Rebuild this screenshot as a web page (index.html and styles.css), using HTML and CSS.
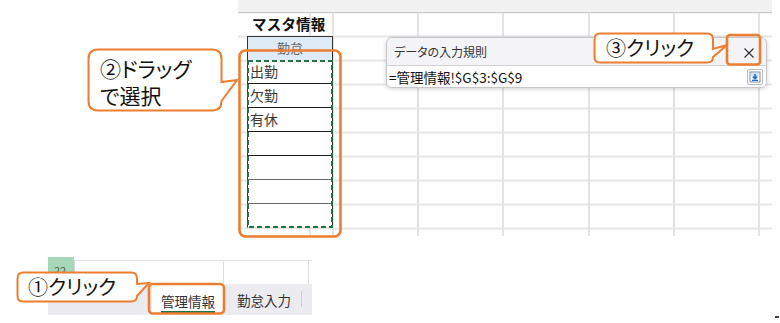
FILE: index.html
```html
<!DOCTYPE html>
<html lang="ja">
<head>
<meta charset="utf-8">
<link rel="stylesheet" href="styles.css">
</head>
<body>
<div class="page">
  <div class="sheet">
    <div class="master">
      <div class="m-title">マスタ情報</div>
      <div class="m-head">勤怠</div>
      <div class="m-row">出勤</div>
      <div class="m-row">欠勤</div>
      <div class="m-row">有休</div>
      <div class="m-row"></div>
      <div class="m-row gray"></div>
      <div class="m-row gray"></div>
      <div class="m-row last"></div>
    </div>
  </div>

  <div class="bottom">
    <div class="rows">
      <div class="rowhdr"><div class="rowsel">22</div></div>
      <div class="cells">
        <div class="cell c1"></div>
        <div class="cell c2"></div>
        <div class="cell c3"></div>
      </div>
    </div>
    <div class="tabs">
      <div class="tab-space"></div>
      <div class="tab active"><span class="tab-label">管理情報</span></div>
      <div class="tab-sep"></div>
      <div class="tab">勤怠入力</div>
      <div class="tab-sep"></div>
    </div>
  </div>

  <div class="dialog">
    <div class="dlg-title">
      <span class="dlg-text">データの入力規則</span>
      <span class="dlg-close">
        <svg width="12" height="12" viewBox="0 0 12 12"><path d="M1.5 1.5 L10.5 10.5 M10.5 1.5 L1.5 10.5" stroke="#333" stroke-width="1.2" fill="none"/></svg>
      </span>
    </div>
    <div class="dlg-input">
      <span class="formula">=管理情報!$G$3:$G$9</span>
      <span class="dlg-btn">
        <svg width="12" height="12" viewBox="0 0 12 12">
          <rect x="1" y="1" width="10" height="10" fill="#fff" stroke="#7d8da3" stroke-width="1"/>
          <rect x="2" y="2" width="8" height="3" fill="#d8e4f5"/>
          <path d="M6 3 V7.5 M3.8 5.5 L6 7.8 L8.2 5.5" stroke="#1f6fd1" stroke-width="1.6" fill="none"/>
          <path d="M3 9.3 H9" stroke="#1f6fd1" stroke-width="1.2"/>
        </svg>
      </span>
    </div>
  </div>

  <svg class="overlay" width="780" height="323" viewBox="0 0 780 323">
    <rect x="248" y="61" width="84" height="166" fill="none" stroke="#217346" stroke-width="2" stroke-dasharray="5 3"/>
    <rect x="239.5" y="50.5" width="101" height="186" rx="6" fill="none" stroke="#ED7D31" stroke-width="2.6"/>
    <rect x="727" y="35" width="33" height="29.5" rx="3" fill="none" stroke="#ED7D31" stroke-width="2.6"/>
    <rect x="149" y="284" width="75" height="29.5" rx="4" fill="none" stroke="#ED7D31" stroke-width="2.6"/>
    <path d="M98,49.5 H212 Q221.5,49.5 221.5,59 V82 L237,80 L221.5,101 Q221.5,110.5 212,110.5 H98 Q88.5,110.5 88.5,101 V59 Q88.5,49.5 98,49.5 Z" fill="#fff" stroke="#ED7D31" stroke-width="2"/>
    <path d="M600,33.5 H707 Q713,33.5 713,39.5 V49 L727,45 L713,57 Q713,62.5 707,62.5 H600 Q594.5,62.5 594.5,57 V39.5 Q594.5,33.5 600,33.5 Z" fill="#fff" stroke="#ED7D31" stroke-width="2"/>
    <path d="M23,272.5 H131 Q137,272.5 137,278.5 V284 L149,283 L137,296 Q137,301.5 131,301.5 H23 Q17.5,301.5 17.5,296 V278.5 Q17.5,272.5 23,272.5 Z" fill="#fff" stroke="#ED7D31" stroke-width="2"/>
  </svg>

  <div class="callout c-drag">②ドラッグ<br>で選択</div>
  <div class="callout c-close">③クリック</div>
  <div class="callout c-tab">①クリック</div>
  <div class="corner-mark"></div>
</div>
</body>
</html>
```

FILE: styles.css
```css
* { box-sizing: border-box; }
html, body { margin: 0; padding: 0; background: #fff; }
body { font-family: "Noto Sans CJK JP", "Noto Sans", sans-serif; color: #222; }

.page {
  position: relative;
  width: 780px;
  height: 323px;
  overflow: hidden;
  background: #fff;
}

/* ---------- top sheet ---------- */
.sheet {
  margin-left: 238px;
  width: 534px;
  height: 236px;
  background-color: #fff;
  background-image:
    linear-gradient(#f1f1f1, #f1f1f1),
    linear-gradient(#c9c9c9, #c9c9c9),
    repeating-linear-gradient(90deg, #e3e3e3 0 2px, transparent 2px 85.2px),
    repeating-linear-gradient(180deg, #e6e6e6 0 2px, transparent 2px 24px);
  background-size: 100% 12px, 100% 1px, 100% 100%, 100% 100%;
  background-position: 0 0, 0 12px, 94px 0, 0 11.5px;
  background-repeat: no-repeat, no-repeat, repeat, repeat;
}

.master {
  margin-left: 9px;
  width: 86px;
  padding-top: 12px;
  display: flex;
  flex-direction: column;
}
.m-title {
  height: 24px;
  font-size: 14.5px;
  font-weight: 700;
  line-height: 24px;
  padding-left: 5px;
  color: #111;
  letter-spacing: 0.2px;
}
.m-head {
  height: 24px;
  background: #ddebf7;
  border: 1px solid #333;
  border-bottom: none;
  text-align: center;
  font-size: 13px;
  line-height: 22px;
  color: #666;
}
.m-row {
  height: 24px;
  background: #fff;
  border-left: 1px solid #333;
  border-right: 1px solid #333;
  border-bottom: 1.5px solid #222;
  font-size: 14px;
  line-height: 23px;
  padding-left: 2px;
  color: #3a3a3a;
}
.m-row.gray { border-bottom-color: #6a6a6a; }
.m-row.last { border-bottom: 1px solid #e3e3e3; }

/* ---------- bottom sheet + tabs ---------- */
.bottom {
  margin-top: 21px;
  margin-left: 48px;
  width: 264px;
}
.rows {
  display: flex;
  height: 27px;
}
.rowhdr {
  width: 26px;
  background: #e8e8e8;
}
.rowsel {
  height: 16px;
  background: #a6d7b9;
  font-size: 11px;
  line-height: 26px;
  padding-left: 6px;
  color: #3f5d4a;
  overflow: hidden;
}
.cells {
  flex: 1;
  display: flex;
  padding-top: 3px;
  background: #fff;
}
.cell {
  border-top: 1px solid #e0e0e0;
  border-right: 1px solid #e0e0e0;
  height: 24px;
}
.cell.c1 { width: 150px; border-left: 1px solid #d8d8d8; }
.cell.c2 { width: 85px; }
.cell.c3 { flex: 1; border-right: none; }

.tabs {
  display: flex;
  align-items: stretch;
  height: 31px;
  background: #ebebf0;
}
.tab-space { width: 104px; }
.tab {
  display: flex;
  align-items: center;
  justify-content: center;
  font-size: 13.5px;
  color: #333;
  padding: 0 10px 0 12px;
}
.tab.active {
  width: 72px;
  background: #fff;
  padding: 0;
}
.tab-label {
  padding: 4px 0 2px;
  border-bottom: 2.5px solid #217346;
  line-height: 16px;
  margin-top: 2px;
}
.tab-sep {
  width: 1px;
  margin: 7px 0 8px;
  background: #cfcfd4;
}
.tab-sep:first-of-type { margin-left: 2px; }

/* ---------- dialog ---------- */
.dialog {
  position: absolute;
  left: 386px;
  top: 37px;
  width: 381px;
  height: 51px;
  border: 1px solid #c6c6cb;
  border-radius: 6px;
  background: #f4f4f7;
  box-shadow: 0 1px 4px rgba(0, 0, 0, 0.18);
  overflow: hidden;
}
.dlg-title {
  height: 27px;
  display: flex;
  align-items: center;
  justify-content: space-between;
  padding-left: 7px;
}
.dlg-text {
  font-size: 12px;
  color: #333;
  font-feature-settings: "palt";
}
.dlg-close {
  width: 34px;
  height: 27px;
  display: flex;
  align-items: center;
  justify-content: center;
  margin-top: 2px;
}
.dlg-input {
  height: 23px;
  background: #fff;
  border-top: 1px solid #d2d2d6;
  display: flex;
  align-items: center;
  justify-content: space-between;
  padding: 0 3px 0 2px;
}
.formula {
  font-size: 13.5px;
  color: #111;
  font-feature-settings: "palt";
}
.dlg-btn {
  width: 16px;
  height: 16px;
  border: 1px solid #b9b9be;
  border-radius: 2px;
  background: #fff;
  display: flex;
  align-items: center;
  justify-content: center;
}

/* ---------- overlay annotations ---------- */
.overlay {
  position: absolute;
  left: 0;
  top: 0;
}
.callout {
  position: absolute;
  font-size: 21px;
  color: #111;
  font-feature-settings: "palt";
  line-height: 27px;
  white-space: nowrap;
}
.c-drag { left: 100px; top: 55px; }
.c-close { left: 606px; top: 34px; font-size: 20px; }
.c-tab { left: 28px; top: 273px; font-size: 20px; }

.corner-mark {
  position: absolute;
  left: 775px;
  top: 316px;
  width: 4px;
  height: 2px;
  background: #444;
}
```
